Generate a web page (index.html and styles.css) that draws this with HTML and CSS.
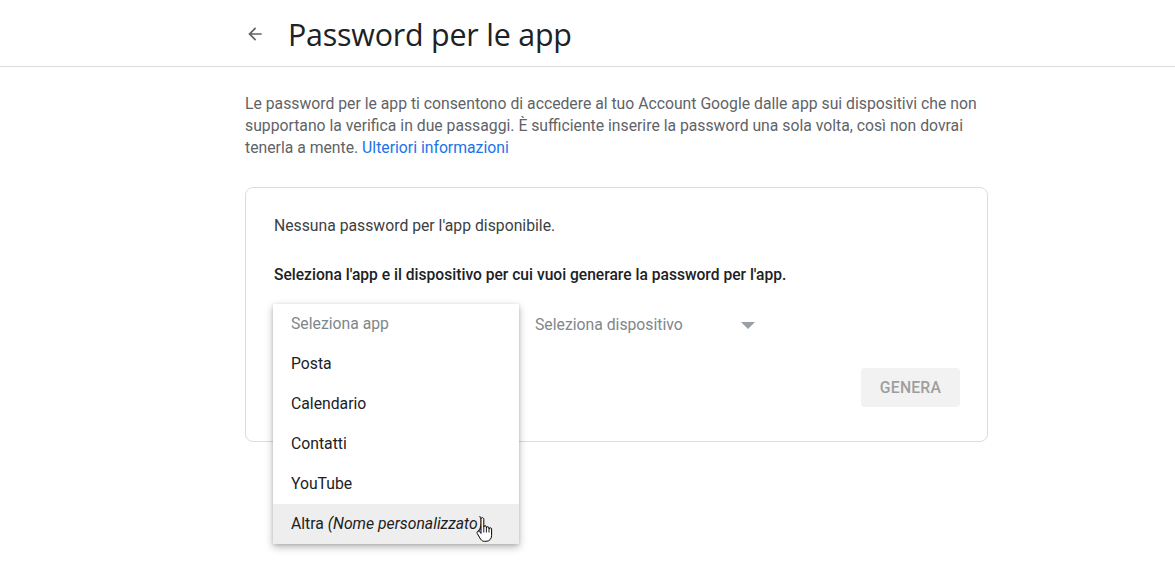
FILE: index.html
```html
<!DOCTYPE html>
<html lang="it">
<head>
<meta charset="utf-8">
<title>Password per le app</title>
<link rel="stylesheet" href="styles.css">
</head>
<body>
<header class="topbar">
  <div class="topbar-inner">
    <span class="back">
      <svg width="20" height="20" viewBox="0 0 24 24"><path d="M20 11H7.83l5.59-5.59L12 4l-8 8 8 8 1.41-1.41L7.83 13H20v-2z" fill="#5f6368"/></svg>
    </span>
    <h1 class="title">Password per le app</h1>
  </div>
</header>
<main class="content">
  <p class="intro">Le password per le app ti consentono di accedere al tuo Account Google dalle app sui dispositivi che non supportano la verifica in due passaggi. È sufficiente inserire la password una sola volta, così non dovrai tenerla a mente. <a class="link" href="#">Ulteriori informazioni</a></p>
  <section class="card">
    <p class="empty">Nessuna password per l'app disponibile.</p>
    <p class="prompt">Seleziona l'app e il dispositivo per cui vuoi generare la password per l'app.</p>
    <div class="selects">
      <div class="select app-select">
        <span class="select-label">Seleziona app</span>
      </div>
      <div class="select device-select">
        <span class="select-label">Seleziona dispositivo</span>
        <span class="caret"></span>
      </div>
    </div>
    <div class="actions">
      <button class="btn" disabled>GENERA</button>
    </div>
  </section>
</main>
<ul class="menu">
  <li class="menu-item placeholder">Seleziona app</li>
  <li class="menu-item">Posta</li>
  <li class="menu-item">Calendario</li>
  <li class="menu-item">Contatti</li>
  <li class="menu-item">YouTube</li>
  <li class="menu-item hover">Altra <em>(Nome personalizzato)</em></li>
</ul>
<svg class="cursor" width="18" height="26" viewBox="0 0 18 26">
  <path d="M5 2.2c0-.9.6-1.5 1.4-1.5S7.8 1.3 7.8 2.2V10c0-.7.6-1.3 1.3-1.3s1.3.6 1.3 1.3v1c0-.7.6-1.3 1.3-1.3s1.3.6 1.3 1.3v1c0-.7.6-1.2 1.3-1.2s1.3.5 1.3 1.2v6.5c0 3.2-2.2 5.8-5.4 5.8H8.6c-1.8 0-3-.8-4-2.1L1.3 16.6c-.5-.7-.4-1.6.3-2.1.6-.5 1.5-.4 2 .2L5 16.4V2.2z" fill="#fff" stroke="#000" stroke-width="1" stroke-linejoin="round"/>
  <path d="M10.4 11v4.5M13 12v3.5M7.8 10v5.5" stroke="#000" stroke-width="0.9" fill="none"/>
</svg>
</body>
</html>
```
FILE: styles.css
```css
* { box-sizing: border-box; }
html, body { margin: 0; padding: 0; background: #fff; }
body {
  font-family: Roboto, "Liberation Sans", Arial, sans-serif;
  color: #202124;
  position: relative;
  min-height: 585px;
}

.topbar {
  height: 67px;
  border-bottom: 1px solid #dadce0;
}
.topbar-inner {
  width: 743px;
  margin-left: 245px;
  height: 66px;
  display: flex;
  align-items: center;
}
.back {
  width: 20px;
  height: 20px;
  display: flex;
  margin-right: 23px;
  margin-top: 2px;
}
.title {
  margin: 0;
  font-family: "Open Sans", Roboto, sans-serif;
  font-weight: 400;
  font-size: 30.4px;
  letter-spacing: -0.2px;
  color: #202124;
  line-height: 1;
  margin-top: 4px;
}

.content {
  width: 743px;
  margin-left: 245px;
  padding-top: 26px;
}
.intro {
  margin: 0 0 28px;
  font-size: 15.75px;
  line-height: 22px;
  color: #5f6368;
}
.link { color: #1a73e8; text-decoration: none; }

.card {
  border: 1px solid #dadce0;
  border-radius: 8px;
  padding: 27px 27px 33px 28px;
  height: 255px;
}
.empty {
  margin: 0;
  font-size: 15.75px;
  line-height: 22px;
  color: #3c4043;
}
.prompt {
  margin: 27px 0 0;
  font-size: 15.6px;
  font-weight: 500;
  line-height: 22px;
  color: #202124;
}
.selects {
  display: flex;
  margin-top: 17px;
  height: 42px;
}
.select {
  display: flex;
  align-items: center;
  height: 42px;
  font-size: 15.75px;
  color: #80868b;
}
.app-select { width: 261px; padding-left: 18px; }
.device-select { width: 226px; justify-content: space-between; padding-right: 6px; }
.caret {
  width: 0; height: 0;
  border-left: 7px solid transparent;
  border-right: 7px solid transparent;
  border-top: 7px solid #9aa0a6;
  margin-top: 2px;
}
.menu {
  position: absolute;
  left: 273px;
  top: 304px;
  width: 246px;
  margin: 0;
  padding: 0;
  list-style: none;
  background: #fff;
  box-shadow: 0 3px 8px rgba(0,0,0,0.28), 0 1px 3px rgba(0,0,0,0.12);
  z-index: 2;
}
.menu-item {
  height: 40px;
  line-height: 40px;
  padding-left: 18px;
  font-size: 15.75px;
  color: #202124;
  white-space: nowrap;
}
.menu-item.placeholder { color: #80868b; }
.menu-item.hover { background: #eeeeee; }
.menu-item em { font-style: italic; }
.cursor {
  position: absolute;
  left: 476px;
  top: 517px;
  z-index: 3;
}

.actions {
  display: flex;
  justify-content: flex-end;
  margin-top: 23px;
}
.btn {
  width: 99px;
  height: 39px;
  border: none;
  border-radius: 4px;
  background: #f2f2f2;
  color: #9e9e9e;
  font-family: Roboto, sans-serif;
  font-size: 15.75px;
  font-weight: 500;
  letter-spacing: 0.2px;
}
```
